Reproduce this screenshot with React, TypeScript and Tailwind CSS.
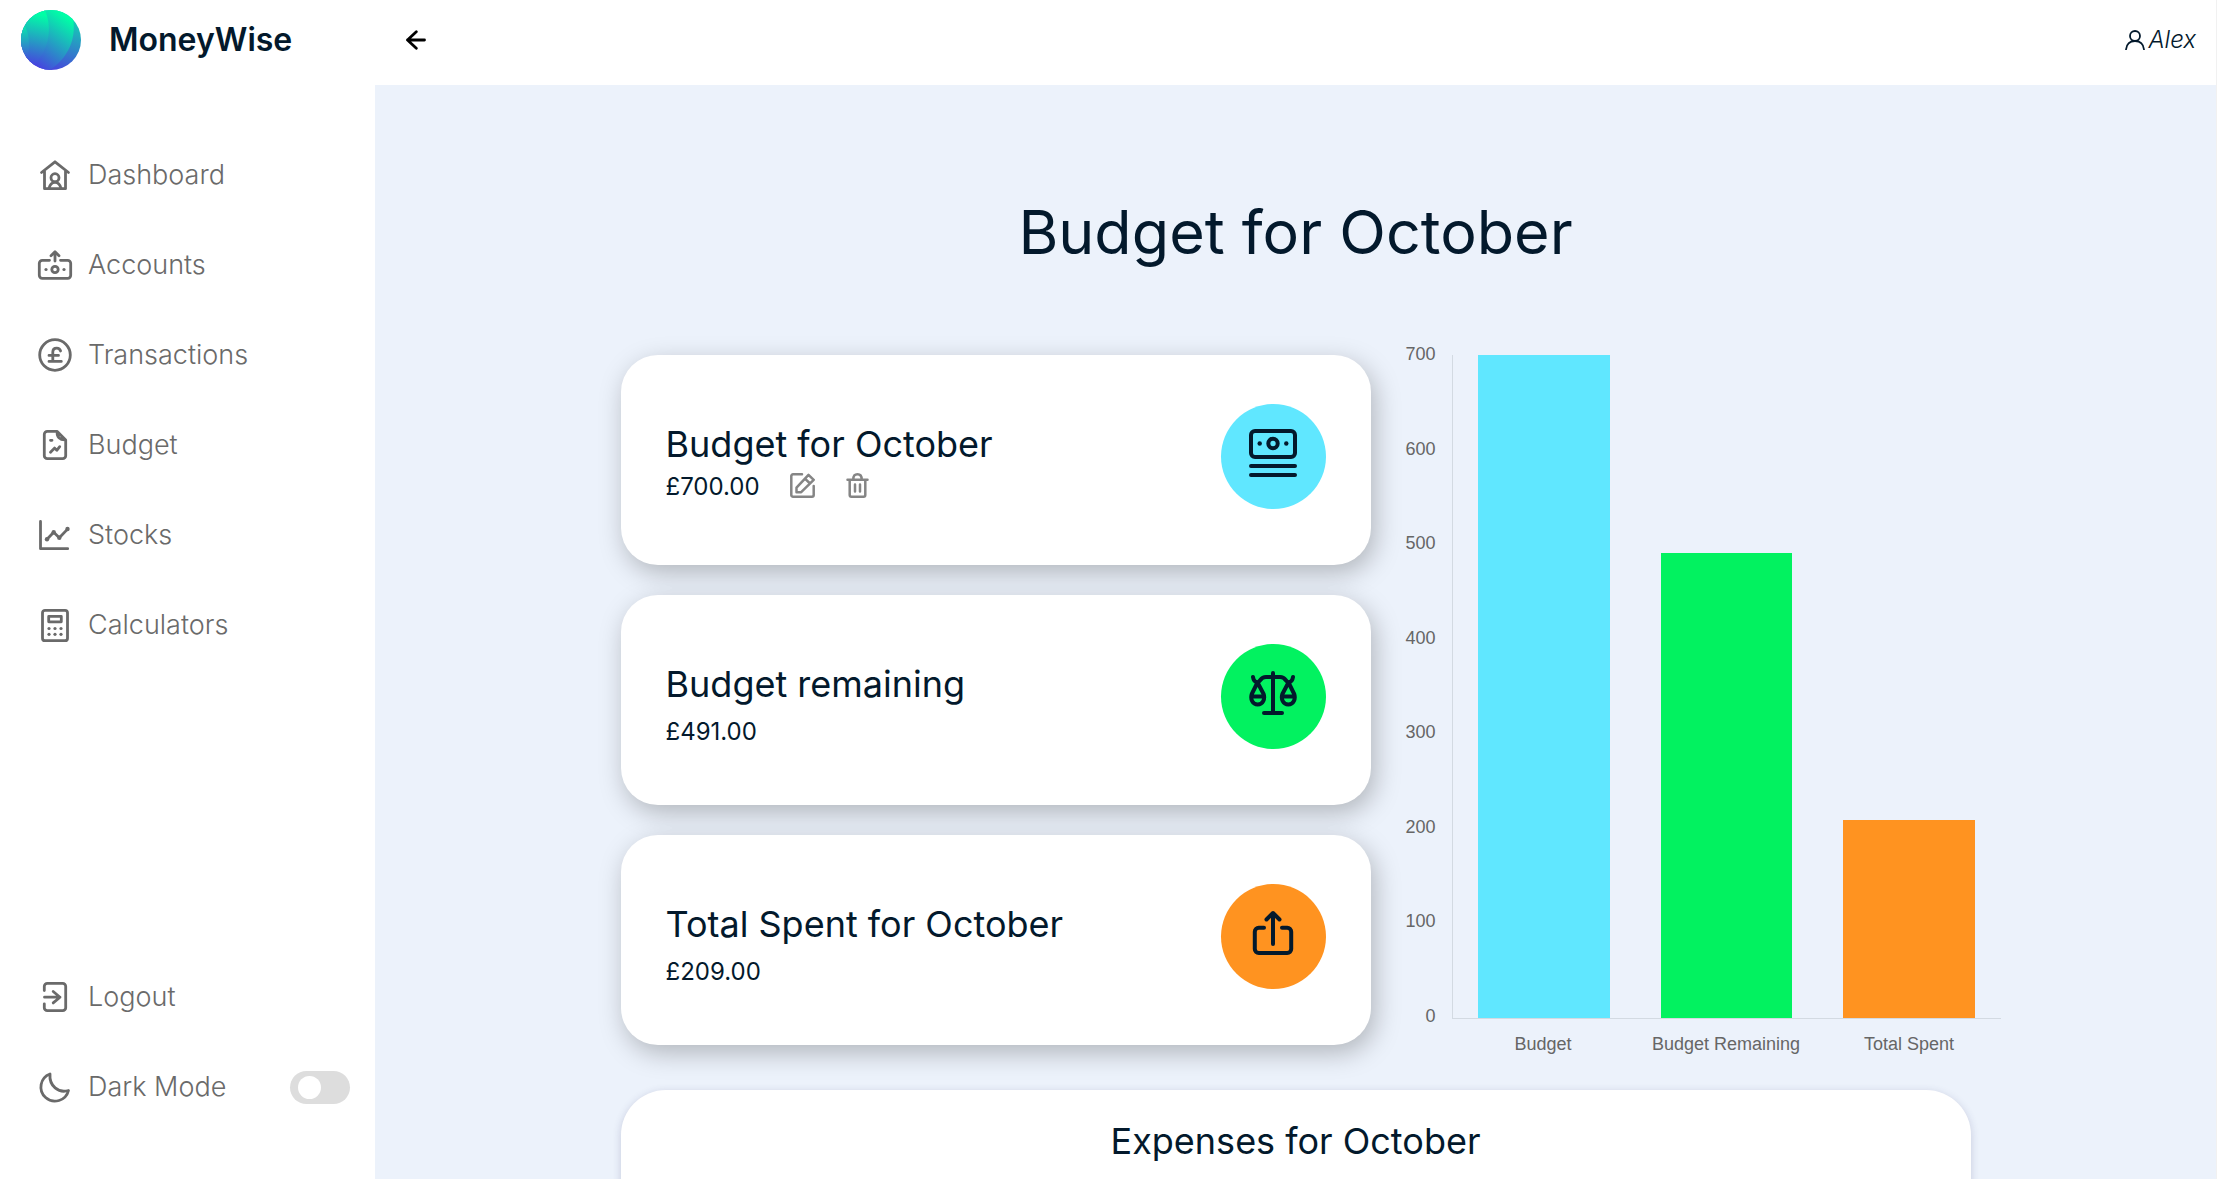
import type { ReactNode } from "react";

type IconProps = { children: ReactNode; size: number; stroke: number; className: string };

function Icon({ children, size, stroke, className }: IconProps) {
  return (
    <svg
      viewBox={`0 0 ${size} ${size}`}
      className={className}
      fill="none"
      stroke="currentColor"
      strokeWidth={stroke}
      strokeLinecap="round"
      strokeLinejoin="round"
      aria-hidden="true"
    >
      {children}
    </svg>
  );
}

function Dots({ points, r }: { points: number[][]; r: number }) {
  return (
    <g fill="currentColor" stroke="none">
      {points.map(([x, y]) => (
        <circle key={`${x}-${y}`} cx={x} cy={y} r={r} />
      ))}
    </g>
  );
}

function Logo() {
  return (
    <svg viewBox="0 0 60 60" className="size-15 shrink-0" aria-hidden="true">
      <defs>
        <clipPath id="disc">
          <circle cx="30" cy="30" r="30" />
        </clipPath>
        <linearGradient id="g1" gradientUnits="userSpaceOnUse" x1="50" y1="10" x2="34" y2="62">
          <stop offset="0" stopColor="#14cdb4" />
          <stop offset="1" stopColor="#4743dc" />
        </linearGradient>
        <linearGradient id="g2" gradientUnits="userSpaceOnUse" x1="50" y1="10" x2="16" y2="58">
          <stop offset="0" stopColor="#00ffa6" />
          <stop offset="1" stopColor="#483fe0" />
        </linearGradient>
        <linearGradient id="g3" gradientUnits="userSpaceOnUse" x1="22" y1="5" x2="10" y2="56">
          <stop offset="0" stopColor="#00ffa6" />
          <stop offset="1" stopColor="#483fe0" />
        </linearGradient>
        <linearGradient id="g4" gradientUnits="userSpaceOnUse" x1="4" y1="14" x2="6" y2="54">
          <stop offset="0" stopColor="#06f0aa" />
          <stop offset="1" stopColor="#4a3de2" />
        </linearGradient>
      </defs>
      <g clipPath="url(#disc)">
        <rect width="60" height="60" fill="url(#g1)" />
        <path d="M0 0H50C57 22 51 45 29 60H0Z" fill="url(#g2)" />
        <path d="M0 0H24C31 17 29 38 14 54L8 60H0Z" fill="url(#g3)" />
        <path d="M0 10C10 22 9 40 6 50L0 54Z" fill="url(#g4)" />
      </g>
    </svg>
  );
}

const navIcons = {
  dashboard: (
    <>
      <path d="M4.5 15.5 18 4.8l13.500 10.700M7.500 14v17.700h21V14" />
      <circle cx="18" cy="20.700" r="4" />
      <path d="M12 31.300c1-4 3.300-6 6-6s5 2 6 6" />
    </>
  ),
  accounts: (
    <>
      <path d="M12.500 13.300H5.300a3 3 0 0 0-3 3v12a3 3 0 0 0 3 3h25.400a3 3 0 0 0 3-3v-12a3 3 0 0 0-3-3h-7.200" />
      <path d="M18 14V5M14 8.700l4-4 4 4" />
      <circle cx="18" cy="22.500" r="3.200" />
      <Dots r={1.6} points={[[9, 22.5], [27, 22.5]]} />
    </>
  ),
  transactions: (
    <>
      <circle cx="18" cy="18" r="15.300" />
      <path d="M23.600 14c-.6-2-2-2.900-3.800-2.900-2.400 0-4 1.500-4 4v9.300M12 24.400h12.300M12 18.400h9.500" />
    </>
  ),
  budget: (
    <>
      <path d="M20 4.300H10.300a3 3 0 0 0-3 3v21.400a3 3 0 0 0 3 3h15.400a3 3 0 0 0 3-3V13zM20.300 4.600c-.8 5 2.500 8.400 8 8.200M13.500 13.300h1.500M13.500 25.300l4-4.200 2.300 2.200 2.900-3.600" />
    </>
  ),
  stocks: (
    <>
      <path d="M3.500 4.500v27.200h27.200M10 22.300l6.700-7 5.600 5.400 8.500-8.800" />
      <Dots r={2.2} points={[[10, 22.3], [16.7, 15.3], [22.3, 20.7], [30.5, 12]]} />
    </>
  ),
  calculators: (
    <>
      <rect x="5.500" y="3.300" width="25" height="30.400" rx="2.500" />
      <path d="M11.700 9.400h12.600v5.400H11.700z" />
      <Dots r={1.6} points={[[12, 21.5], [18, 21.5], [24, 21.5], [12, 27.3], [18, 27.3], [24, 27.3]]} />
    </>
  ),
  logout: (
    <>
      <path d="M7.300 11.500V7.300a3 3 0 0 1 3-3h15.400a3 3 0 0 1 3 3v21.400a3 3 0 0 1-3 3H10.300a3 3 0 0 1-3-3v-3.900M7.500 18.200h15.500M16.200 12.500l6.800 5.700-6.800 5.700" />
    </>
  ),
  moon: <path d="M13 5A14 14 0 1 0 31.500 21.500C21.500 24.500 12 17 13 5Z" />,
};

function NavIcon({ name }: { name: keyof typeof navIcons }) {
  return (
    <Icon size={36} stroke={2.8} className="size-9 shrink-0">
      {navIcons[name]}
    </Icon>
  );
}

const links: { label: string; icon: keyof typeof navIcons }[] = [
  { label: "Dashboard", icon: "dashboard" },
  { label: "Accounts", icon: "accounts" },
  { label: "Transactions", icon: "transactions" },
  { label: "Budget", icon: "budget" },
  { label: "Stocks", icon: "stocks" },
  { label: "Calculators", icon: "calculators" },
];

function NavLink({ label, icon }: { label: string; icon: keyof typeof navIcons }) {
  return (
    <a href="#" className="flex h-[90px] items-center gap-[15px] pl-[37px]">
      <NavIcon name={icon} />
      {label}
    </a>
  );
}

function Sidebar() {
  return (
    <aside className="flex w-[375px] shrink-0 flex-col bg-white pb-[47px]">
      <div className="flex h-20 items-center gap-7 pl-[21px]">
        <Logo />
        <span className="text-[32px] leading-10 font-semibold">MoneyWise</span>
      </div>
      <nav className="mt-[50px] text-[27px] font-light text-[#6a6a6a]">
        {links.map((link) => (
          <NavLink key={link.label} label={link.label} icon={link.icon} />
        ))}
      </nav>
      <div className="mt-auto text-[27px] font-light text-[#6a6a6a]">
        <NavLink label="Logout" icon="logout" />
        <label className="flex h-[90px] items-center gap-[15px] pr-[25px] pl-[37px]">
          <NavIcon name="moon" />
          Dark Mode
          <input
            type="checkbox"
            role="switch"
            className="ml-auto h-[33px] w-[60px] appearance-none rounded-full bg-[#dddddd] py-[5px] pl-2 before:block before:size-[23px] before:rounded-full before:bg-white"
          />
        </label>
      </div>
    </aside>
  );
}

function TopBar() {
  return (
    <header className="flex h-[85px] shrink-0 items-center justify-between bg-white pr-5 pb-[6px] pl-[31px]">
      <button type="button" aria-label="Back">
        <Icon size={20} stroke={2.8} className="size-5 text-black">
          <path d="M18.500 10H1.500M10.300 1.800 1.500 10l8.800 8.200" />
        </Icon>
      </button>
      <a href="#" className="flex items-center gap-[3px] text-2xl font-light italic">
        <Icon size={20} stroke={1.8} className="size-5">
          <circle cx="10" cy="6" r="5" />
          <path d="M1 19.500c.4-5.400 4-8.500 9-8.500s8.600 3.100 9 8.500" />
        </Icon>
        Alex
      </a>
    </header>
  );
}

function SummaryCard({
  title,
  color,
  icon,
  children,
}: {
  title: string;
  color: string;
  icon: ReactNode;
  children: ReactNode;
}) {
  return (
    <section className="flex h-[210px] items-start justify-between rounded-[37px] bg-white px-[45px] pt-[49px] shadow-[4px_8px_26px_rgba(0,0,0,0.25)]">
      <div className="pt-[18px]">
        <h2 className="text-4xl leading-[44px]">{title}</h2>
        {children}
      </div>
      <div className={`flex size-[105px] items-start justify-center rounded-full pt-[25px] ${color}`}>
        <Icon size={48} stroke={4} className="size-12">
          {icon}
        </Icon>
      </div>
    </section>
  );
}

const cashIcon = (
  <>
    <rect x="2" y="2" width="44" height="26" rx="4" />
    <path d="M2 37h44M2 46h44" />
    <circle cx="24" cy="14.500" r="4.700" />
    <Dots r={2.2} points={[[10.7, 14.5], [37.3, 14.5]]} />
  </>
);

const balanceIcon = (
  <>
    <path d="M24 4v40M15 44h18M4 8c.4 3 2 5.200 4.500 5.200C11.500 13.200 11 8 17 8h14c6 0 5.500 5.200 8.500 5.200 2.500 0 4.100-2.200 4.500-5.200" />
    <path d="M8.500 13.500 2.800 25c-1.700 5 .7 10.500 5.900 10.500S16.300 30 14.600 25zM2.500 27.500h12.400M39.500 13.500 45.200 25c1.700 5-.7 10.500-5.900 10.500S31.700 30 33.400 25zM45.500 27.500H33.100" />
  </>
);

const shareIcon = (
  <path d="M15 18.700H9.800a4 4 0 0 0-4 4V40a4 4 0 0 0 4 4h28.400a4 4 0 0 0 4-4V22.700a4 4 0 0 0-4-4H33M24 35V4M17.500 10.500 24 4l6.500 6.500" />
);

const bars = [
  { label: "Budget", value: 700, color: "bg-[#60e7ff]" },
  { label: "Budget Remaining", value: 491, color: "bg-[#02f260]" },
  { label: "Total Spent", value: 209, color: "bg-[#ff9320]" },
];
const ticks = [700, 600, 500, 400, 300, 200, 100, 0];

function BudgetChart() {
  return (
    <figure
      aria-label="Budget chart"
      className="-mr-[30px] flex min-w-0 flex-1 gap-4 font-['Liberation_Sans',Arial,sans-serif] text-lg leading-5 text-[#666666]"
    >
      <div className="-mt-[11px] flex h-[682px] w-8 flex-col justify-between text-right">
        {ticks.map((tick) => (
          <span key={tick}>{tick}</span>
        ))}
      </div>
      <div className="flex-1">
        <div className="grid h-[664px] grid-cols-3 items-end border-b border-l border-[#d3dae2]">
          {bars.map((bar) => (
            <div
              key={bar.label}
              className={`mx-auto w-[72%] ${bar.color}`}
              style={{ height: `${(bar.value / 700) * 100}%` }}
            />
          ))}
        </div>
        <div className="mt-[15px] grid grid-cols-3 text-center whitespace-nowrap">
          {bars.map((bar) => (
            <span key={bar.label}>{bar.label}</span>
          ))}
        </div>
      </div>
    </figure>
  );
}

export default function App() {
  return (
    <div className="flex h-screen overflow-hidden border-r border-[#f1f1f1] bg-[#ecf2fb] font-['Inter',sans-serif] text-[#03192c]">
      <Sidebar />
      <div className="flex min-w-0 flex-1 flex-col">
        <TopBar />
        <main className="flex-1 overflow-hidden pt-[111px]">
          <h1 className="text-center text-[61px] leading-[72px]">Budget for October</h1>
          <div className="mx-auto mt-[87px] max-w-[1350px]">
            <div className="flex gap-[33px]">
              <div className="flex w-[750px] shrink-0 flex-col gap-[30px]">
                <SummaryCard title="Budget for October" color="bg-[#60e7ff]" icon={cashIcon}>
                  <div className="flex h-[42px] items-center text-2xl">
                    £700.00
                    <button type="button" aria-label="Edit budget" className="mb-1 ml-[30px] text-[#858585]">
                      <Icon size={25} stroke={2.5} className="size-[25px]">
                        <path d="M12 1.300H3a1.700 1.700 0 0 0-1.700 1.700v19A1.700 1.700 0 0 0 3 23.700h19a1.700 1.700 0 0 0 1.700-1.700v-9M6.500 19v-4.300L18.500 1.800l5.200 5-12.500 12.400H6.500zM15 5.700l5 4.800" />
                      </Icon>
                    </button>
                    <button type="button" aria-label="Delete budget" className="mb-1 ml-[30px] text-[#858585]">
                      <Icon size={25} stroke={2.5} className="size-[25px]">
                        <path d="M2.500 6.700h20M4.700 6.700v15.300a1.700 1.700 0 0 0 1.700 1.700h12.200a1.700 1.700 0 0 0 1.700-1.700V6.700M8.300 6.500c0-3.500 1.200-5.200 4.200-5.200s4.200 1.700 4.200 5.200M10 11.500v7M15 11.500v7" />
                      </Icon>
                    </button>
                  </div>
                </SummaryCard>
                <SummaryCard title="Budget remaining" color="bg-[#02f260]" icon={balanceIcon}>
                  <p className="text-2xl leading-[52px]">£491.00</p>
                </SummaryCard>
                <SummaryCard title="Total Spent for October" color="bg-[#ff9320]" icon={shareIcon}>
                  <p className="text-2xl leading-[52px]">£209.00</p>
                </SummaryCard>
              </div>
              <BudgetChart />
            </div>
            <section className="mt-9 rounded-t-[45px] bg-white pt-[29px] pb-40 shadow-[0_2px_8px_rgba(50,50,105,0.2)]">
              <h2 className="text-center text-4xl leading-[44px]">Expenses for October</h2>
            </section>
          </div>
        </main>
      </div>
    </div>
  );
}
